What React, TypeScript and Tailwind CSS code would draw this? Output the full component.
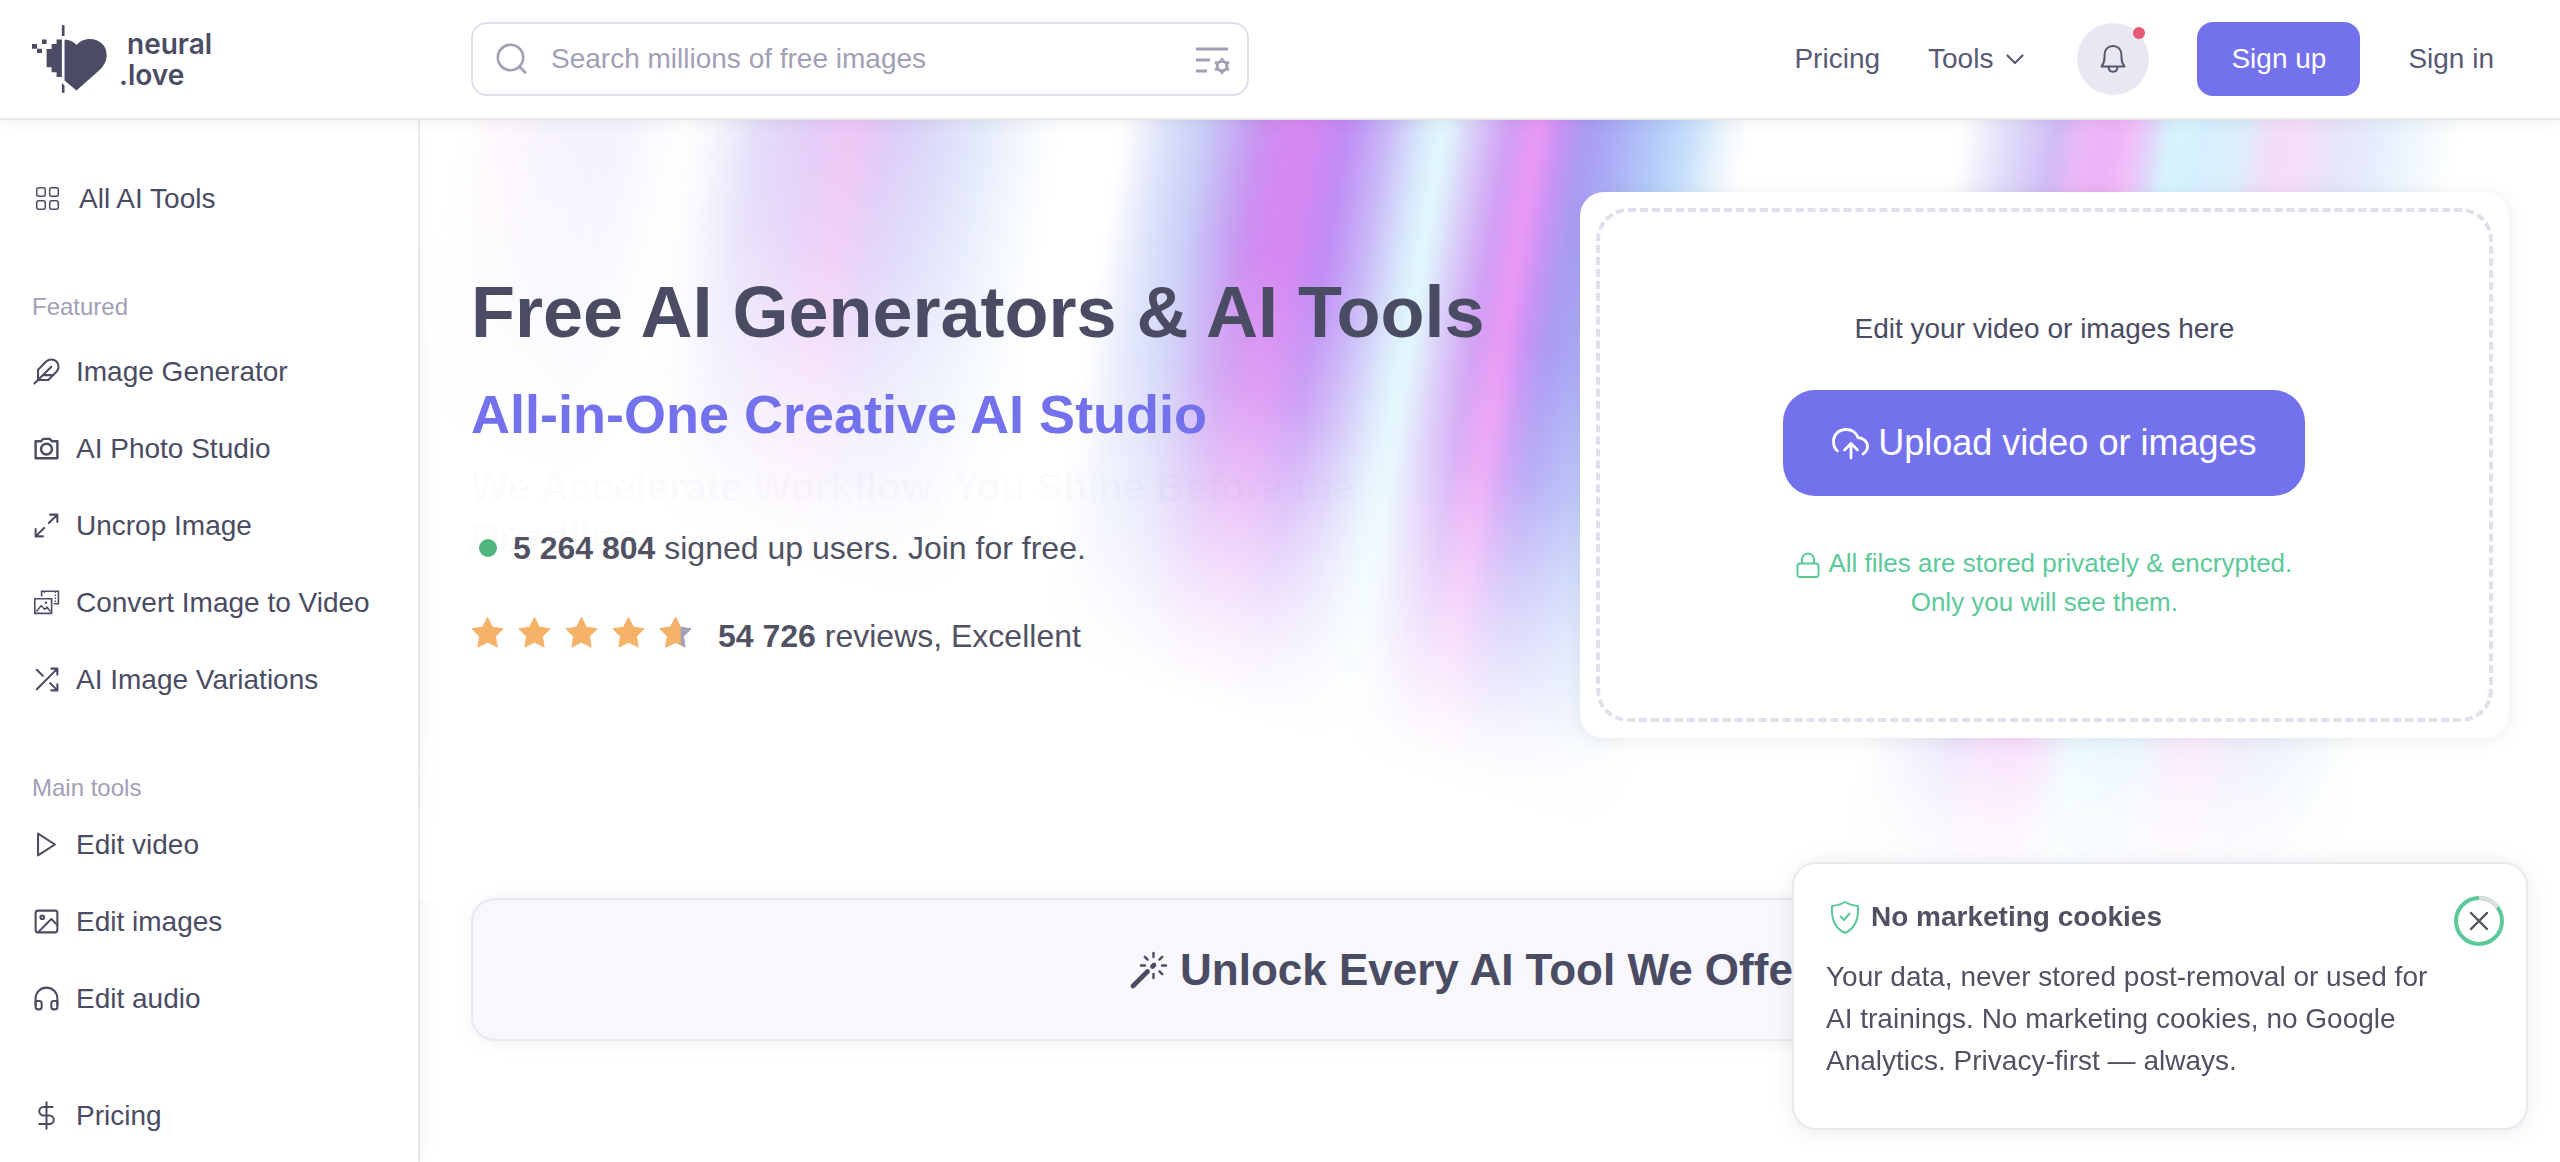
import type { ReactNode } from "react";
import { RiCameraLine } from "react-icons/ri";

const AURORA: [number, string][] = [
  [40, "#ffffff"], [80, "#fdf6fc"], [140, "#f5f1fd"], [200, "#f1f2fe"], [235, "#f8f9fe"], [265, "#ffffff"],
  [300, "#f4f3fc"], [340, "#e2daf9"], [395, "#e2ccf8"], [435, "#efc5f4"], [470, "#decbf8"], [510, "#dcd8f9"],
  [560, "#e3e9fb"], [605, "#f3f8fe"], [645, "#ffffff"], [705, "#ffffff"], [742, "#e0e5fb"], [786, "#c9cdf7"],
  [824, "#c6a4f3"], [850, "#cd8df1"], [885, "#d987f2"], [928, "#bf8bf4"], [965, "#c8b4f7"], [1005, "#d9eafc"],
  [1027, "#e2fafd"], [1058, "#d9c9f8"], [1092, "#cf9cf4"], [1120, "#ee99f4"], [1142, "#c893f5"], [1168, "#a89bf3"],
  [1198, "#abadf6"], [1242, "#b5cdf9"], [1275, "#c9e1fb"], [1305, "#ecf5fd"], [1330, "#ffffff"], [1545, "#ffffff"],
  [1575, "#e9e8fa"], [1606, "#dbd3f8"], [1640, "#cfbaf6"], [1667, "#efb8f8"], [1689, "#e8b2f6"], [1709, "#f4b8f8"],
  [1734, "#e3d4fb"], [1755, "#d5f7fd"], [1784, "#d6effe"], [1824, "#dbeffe"], [1852, "#f1ddfa"], [1884, "#f7defa"],
  [1919, "#e6e4fa"], [1954, "#e5ebfc"], [1994, "#eff6fe"], [2024, "#f8fcfd"], [2045, "#ffffff"],
];

function Aurora() {
  return (
    <svg
      className="pointer-events-none absolute inset-x-0 top-0 h-[780px] w-full"
      viewBox="0 0 2140 780"
      preserveAspectRatio="none"
      aria-hidden="true"
    >
      <defs>
        <linearGradient id="rays" gradientUnits="userSpaceOnUse" x1="0" y1="0" x2="2083" y2="344">
          {AURORA.map(([x, color]) => (
            <stop key={x} offset={x / 2140} stopColor={color} />
          ))}
        </linearGradient>
        <linearGradient id="fade" gradientUnits="userSpaceOnUse" x1="43" y1="-130" x2="-97" y2="294">
          <stop offset="0" stopColor="#fff" />
          <stop offset="0.3" stopColor="#ccc" />
          <stop offset="0.6" stopColor="#666" />
          <stop offset="0.85" stopColor="#1c1c1c" />
          <stop offset="1" stopColor="#000" />
        </linearGradient>
        <linearGradient id="floor" x1="0" y1="0" x2="0" y2="1">
          <stop offset="0" stopColor="#fff" stopOpacity="0" />
          <stop offset="1" stopColor="#fff" stopOpacity="0.8" />
        </linearGradient>
        <filter id="soften" x="-5%" y="-5%" width="110%" height="110%">
          <feGaussianBlur stdDeviation="7" />
        </filter>
        <mask id="fadeMask" maskUnits="userSpaceOnUse" x="0" y="0" width="2140" height="780">
          <rect width="2140" height="780" fill="url(#fade)" />
        </mask>
      </defs>
      <g mask="url(#fadeMask)">
        <rect x="-60" y="-60" width="2260" height="900" fill="url(#rays)" filter="url(#soften)" />
      </g>
      <rect y="580" width="2140" height="200" fill="url(#floor)" />
    </svg>
  );
}

function Icon({ children, className = "size-[29px]" }: { children: ReactNode; className?: string }) {
  return (
    <svg
      className={`shrink-0 ${className}`}
      viewBox="0 0 24 24"
      fill="none"
      stroke="currentColor"
      strokeWidth="1.7"
      strokeLinecap="round"
      strokeLinejoin="round"
      aria-hidden="true"
    >
      {children}
    </svg>
  );
}

function Logo() {
  return (
    <a href="#" className="flex items-center text-[#4a4c63]">
      <svg className="h-[68px] w-[75px]" viewBox="96 75 226 204" fill="currentColor" aria-hidden="true">
        <path d="M194 119C208 119 222 124 230 135C240 124 254 117 270 117C300 117 321 138 321 164C321 184 312 198 298 212L230 272L194 242Z" />
        <path d="M170 118h16v113h-16v-14h-15v-15h-15v-55h15v-15h15z" />
        <path d="M126 118h14v14h-14zM96 132h15v14h15v13h-15v-13H96zM186 75h8v33h-8zM186 249l8 8v22h-8z" />
      </svg>
      <span className="ml-3 block pt-[2px] font-['Inter',sans-serif] text-[28px] leading-[31px] font-semibold">
        <span className="block pl-2">neural</span>
        <span className="block">.love</span>
      </span>
    </a>
  );
}

const FEATURED: { label: string; icon: ReactNode }[] = [
  {
    label: "Image Generator",
    icon: (
      <Icon>
        <path d="M20.24 12.24a6 6 0 0 0-8.49-8.49L5 10.5V19h8.5zM16 8 2 22M17.5 15H9" />
      </Icon>
    ),
  },
  { label: "AI Photo Studio", icon: <RiCameraLine className="size-[29px] shrink-0" aria-hidden="true" /> },
  {
    label: "Uncrop Image",
    icon: (
      <Icon>
        <path d="M15 3h6v6M9 21H3v-6M21 3l-7 7M3 21l7-7" />
      </Icon>
    ),
  },
  {
    label: "Convert Image to Video",
    icon: (
      <svg className="size-[29px] shrink-0" viewBox="0 0 29 29" fill="none" stroke="currentColor" strokeWidth="1.6" aria-hidden="true">
        <path d="M2.8 10.8h16.8v14.6H2.8zM9.6 8.4V3.2h16.8v12.6h-4.6" />
        <path d="m4.5 23.5 4.7-6 3.5 4 2.3-2.5 3.5 4.5" strokeWidth="1.4" />
        <path d="M12.3 3.5v3M23.4 3.5v12" strokeWidth="1.3" strokeDasharray="1.6 1.4" />
        <circle cx="14" cy="14.8" r="1.2" fill="currentColor" stroke="none" />
      </svg>
    ),
  },
  {
    label: "AI Image Variations",
    icon: (
      <Icon>
        <path d="M16 3h5v5M4 20 21 3M21 16v5h-5M15 15l6 6M4 4l5 5" />
      </Icon>
    ),
  },
];

const MAIN_TOOLS: { label: string; icon: ReactNode }[] = [
  {
    label: "Edit video",
    icon: (
      <Icon>
        <path d="m5 3 14 9-14 9z" />
      </Icon>
    ),
  },
  {
    label: "Edit images",
    icon: (
      <Icon>
        <rect x="3" y="3" width="18" height="18" rx="2" />
        <circle cx="8.5" cy="8.5" r="1.5" />
        <path d="m21 15-5-5L5 21" />
      </Icon>
    ),
  },
  {
    label: "Edit audio",
    icon: (
      <Icon>
        <path d="M3 18v-6a9 9 0 0 1 18 0v6" />
        <path d="M21 19a2 2 0 0 1-2 2h-1a2 2 0 0 1-2-2v-3a2 2 0 0 1 2-2h3zM3 19a2 2 0 0 0 2 2h1a2 2 0 0 0 2-2v-3a2 2 0 0 0-2-2H3z" />
      </Icon>
    ),
  },
];

function SideLink({ label, icon }: { label: string; icon: ReactNode }) {
  return (
    <a href="#" className="flex h-[77px] items-center gap-[15px] whitespace-nowrap">
      {icon}
      {label}
    </a>
  );
}

function Sidebar() {
  return (
    <aside className="w-[420px] shrink-0 border-r-2 border-[#e8e8f1] pt-10 pl-8 text-[28px] text-[#4a4c63] shadow-[2px_0_16px_rgba(0,0,0,0.05)]">
      <nav aria-label="Tools">
        <a href="#" className="flex h-[77px] items-center gap-[18px]">
          <svg className="size-[29px] shrink-0" viewBox="0 0 29 29" fill="none" stroke="currentColor" strokeWidth="1.5" aria-hidden="true">
            <rect x="4.7" y="3.7" width="8.6" height="8.6" rx="2" />
            <rect x="17.7" y="3.7" width="8.6" height="8.6" rx="2" />
            <rect x="4.7" y="16.7" width="8.6" height="8.6" rx="2" />
            <rect x="17.7" y="16.7" width="8.6" height="8.6" rx="2" />
          </svg>
          All AI Tools
        </a>
        <h2 className="mt-[52px] mb-2 text-2xl leading-9 text-[#a0a0b6]">Featured</h2>
        {FEATURED.map((item) => (
          <SideLink key={item.label} {...item} />
        ))}
        <h2 className="mt-[52px] text-2xl leading-9 text-[#a0a0b6]">Main tools</h2>
        {MAIN_TOOLS.map((item) => (
          <SideLink key={item.label} {...item} />
        ))}
        <div className="mt-10">
          <SideLink
            label="Pricing"
            icon={
              <Icon>
                <path d="M12 1v22M17 5H9.5a3.5 3.5 0 0 0 0 7h5a3.5 3.5 0 0 1 0 7H6" />
              </Icon>
            }
          />
        </div>
      </nav>
    </aside>
  );
}

function Header() {
  return (
    <header className="relative z-10 flex h-[120px] items-center border-b-2 border-[#e8e8f1] bg-white pl-8 text-[28px] text-[#585a75] shadow-[0_2px_16px_rgba(0,0,0,0.06)]">
      <div className="w-[439px] shrink-0">
        <Logo />
      </div>
      <form role="search" className="flex h-[74px] w-[778px] items-center rounded-2xl border-2 border-[#e0dfeb] bg-white pr-4 pl-[22px] text-[#a0a0b6]">
        <svg className="size-8 shrink-0" viewBox="0 0 32 32" fill="none" stroke="currentColor" strokeWidth="2.6" strokeLinecap="round" aria-hidden="true">
          <circle cx="15.5" cy="14.5" r="12.7" />
          <path d="m24.5 23.5 5.7 6" />
        </svg>
        <input
          type="search"
          aria-label="Search millions of free images"
          placeholder="Search millions of free images"
          className="ml-6 min-w-0 flex-1 bg-transparent outline-none placeholder:text-[#a0a0b6]"
        />
        <button type="button" aria-label="Search settings">
          <svg className="h-8 w-9" viewBox="0 0 36 32" fill="none" stroke="currentColor" strokeWidth="3" aria-hidden="true">
            <path d="M1 6h32M1 17h14M1 28h11" />
            <circle cx="27" cy="23" r="4.8" strokeWidth="3" />
            <path d="M27 15v4M27 27v4M20 19l3.4 2M30.6 25l3.4 2M20 27l3.4-2M30.6 21l3.4-2" strokeWidth="3" />
          </svg>
        </button>
      </form>
      <nav aria-label="Account" className="ml-auto flex items-center pr-[66px]">
        <a href="#">Pricing</a>
        <button type="button" className="ml-12 flex items-center gap-3">
          Tools
          <svg className="h-5 w-5" viewBox="0 0 20 20" fill="none" stroke="currentColor" strokeWidth="2.2" strokeLinecap="round" strokeLinejoin="round" aria-hidden="true">
            <path d="m2.5 6.500 7.500 7.500 7.500-7.500" />
          </svg>
        </button>
        <button type="button" aria-label="Notifications" className="relative ml-[52px] flex size-[72px] items-center justify-center rounded-full bg-[#e8e8f2] text-[#55566a]">
          <svg className="size-8" viewBox="0 0 32 32" fill="none" stroke="currentColor" strokeWidth="2" strokeLinejoin="round" aria-hidden="true">
            <path d="M4.500 23.500h23c-2-2.500-3-5-3-9v-2C24.500 6.500 21 3 16 3s-8.500 3.500-8.500 9.500v2c0 4-1 6.500-3 9z" />
            <path d="M11.500 23.500c0 3.500 1.800 5.200 4.500 5.200s4.500-1.700 4.500-5.200" />
          </svg>
          <span className="absolute top-1 right-1 size-3 rounded-full bg-[#e65a78]" />
        </button>
        <a href="#" className="ml-12 flex h-[74px] items-center rounded-2xl bg-[#7371ec] px-[34px] text-white">
          Sign up
        </a>
        <a href="#" className="ml-12">
          Sign in
        </a>
      </nav>
    </header>
  );
}

const STAR = "M16.500 4.500 21.700 14.800 33 16.600 25 24.700 26.800 36 16.500 30.900 6.200 36 8 24.700 0 16.600 11.300 14.800Z";

function Stars() {
  return (
    <span className="flex gap-[14px]" role="img" aria-label="4.7 out of 5 stars">
      {[0, 1, 2, 3, 4].map((i) => (
        <svg key={i} className="h-10 w-[33px]" viewBox="-1 0 35 40" aria-hidden="true">
          {i === 4 && (
            <clipPath id="partial">
              <rect x="-1" width="23" height="40" />
            </clipPath>
          )}
          {i === 4 && <path d={STAR} fill="#a0a0b6" stroke="#a0a0b6" strokeLinejoin="round" />}
          <path
            d={STAR}
            fill="#f5b36a"
            stroke="#f5b36a"
            strokeLinejoin="round"
            clipPath={i === 4 ? "url(#partial)" : undefined}
          />
        </svg>
      ))}
    </span>
  );
}

function Intro() {
  return (
    <div className="min-w-0 flex-1 pt-[72px]">
      <h1 className="text-[72px] leading-[96px] font-bold whitespace-nowrap text-[#4a4c63]">Free AI Generators &amp; AI Tools</h1>
      <div className="relative mt-[18px] font-bold">
        <p className="text-[54px] leading-[72px] text-[#7371ec]">All-in-One Creative AI Studio</p>
        <p className="absolute top-full left-0 mt-3 w-[900px] text-[40px] leading-[50px] text-[#8080a0]/3">
          We Accelerate Workflow, You Shine Before the Deadline
        </p>
      </div>
      <p className="relative mt-[74px] flex items-center gap-4 pl-2 text-[32px] leading-[48px] text-[#505263]">
        <span className="size-[18px] rounded-full bg-[#50b480]" />
        <span>
          <strong>5 264 804</strong> signed up users. Join for free.
        </span>
      </p>
      <div className="mt-10 flex items-start gap-[26px] text-[32px] leading-[48px] text-[#505263]">
        <Stars />
        <p>
          <strong>54 726</strong> reviews, Excellent
        </p>
      </div>
    </div>
  );
}

function UploadCard() {
  return (
    <div className="w-[45.6%] shrink-0 rounded-3xl bg-white p-4 shadow-[0_2px_20px_rgba(0,0,0,0.07)]">
      <div className="flex min-h-[514px] flex-col items-center justify-center rounded-[32px] border-4 border-dashed border-[#e0dfeb]">
        <p className="text-[28px] leading-[42px] text-[#4a4c63]">Edit your video or images here</p>
        <button type="button" className="mt-10 flex h-[106px] items-center gap-2 rounded-[32px] bg-[#7371ec] px-[49px] text-4xl text-white">
          <svg className="h-[33px] w-[38px]" viewBox="0 0 38 33" fill="none" stroke="currentColor" strokeWidth="2.8" strokeLinecap="round" strokeLinejoin="round" aria-hidden="true">
            <path d="M5.500 24C3 22 1.500 18.500 1.500 14.500 1.500 7.500 7 2.500 14 2.500c5.500 0 10.500 3 12 8 5 .5 9.500 4 9.500 9 0 3-1.500 5.500-4.500 7.500" />
            <path d="M19 31V17M12.500 23l6.500-6.500 6.500 6.500" />
          </svg>
          Upload video or images
        </button>
        <p className="mt-12 text-center text-[26px] leading-[39px] text-[#5cc99a]">
          <svg className="mr-2 inline h-7 w-6" viewBox="0 0 24 28" fill="none" stroke="currentColor" strokeWidth="2" aria-hidden="true">
            <rect x="1.500" y="12.500" width="21" height="13.500" rx="2.500" />
            <path d="M6 12.500V8.500a6 6 0 0 1 12 0v4" />
          </svg>
          All files are stored privately &amp; encrypted.
          <br />
          Only you will see them.
        </p>
      </div>
    </div>
  );
}

function Banner() {
  return (
    <a href="#" className="mt-40 flex h-[143px] items-center justify-center gap-3 rounded-3xl border-2 border-[#e8e8f1] bg-[#f7f7fc] pr-10 text-[44px] font-bold text-[#4a4c63] shadow-[0_2px_20px_rgba(0,0,0,0.06)]">
      <svg className="size-[38px]" viewBox="0 0 38 38" fill="none" stroke="currentColor" strokeWidth="2.400" strokeLinecap="round" aria-hidden="true">
        <path d="M3 35 17.500 20.500" strokeWidth="4.600" />
        <path d="m22.500 15.500 1.500-1.500" strokeWidth="4.600" />
        <path d="M23.500 2v4M23.500 23v4M11 14.500h4M32 14.500h4M14.800 5.800l2.800 2.800M32.200 5.800l-2.800 2.800M29.400 20.400l2.800 2.800" />
      </svg>
      Unlock Every AI Tool We Offer
    </a>
  );
}

function CookieNotice() {
  return (
    <section aria-label="Privacy notice" className="fixed right-8 bottom-8 z-20 w-[736px] rounded-3xl border-2 border-[#e8e8f1] bg-white pt-8 pr-[22px] pb-[46px] pl-8 text-[28px] leading-[42px] text-[#505263] shadow-[0_2px_24px_rgba(0,0,0,0.08)]">
      <div className="flex items-start justify-between">
        <div>
          <h2 className="flex items-center gap-2 font-bold">
            <svg className="size-[37px] text-[#5cc99a]" viewBox="0 0 37 37" fill="none" stroke="currentColor" strokeWidth="2" strokeLinecap="round" strokeLinejoin="round" aria-hidden="true">
              <path d="M19 3C15 5.500 10.500 6.500 6 7c-.8 11.500 2 22 13 27 11-5 13.800-15.500 13-27-4.500-.5-9-1.500-13-4z" />
              <path d="m14.500 17.500 3.500 3.500 5.500-6.500" />
            </svg>
            No marketing cookies
          </h2>
          <p className="mt-[18px] w-[630px]">
            Your data, never stored post-removal or used for AI trainings. No marketing cookies, no Google Analytics. Privacy-first — always.
          </p>
        </div>
        <button type="button" aria-label="Close" className="-ml-10">
          <svg className="size-[50px]" viewBox="0 0 50 50" fill="none" aria-hidden="true">
            <circle cx="25" cy="25" r="23" stroke="#5cc99a" strokeWidth="4" />
            <path d="M25 2a23 23 0 0 1 18.600 9.500" stroke="#dcdedc" strokeWidth="4" />
            <path d="m17 17 16 16M33 17 17 33" stroke="#505263" strokeWidth="2.400" strokeLinecap="round" />
          </svg>
        </button>
      </div>
    </section>
  );
}

export default function App() {
  return (
    <div className="flex min-h-screen flex-col bg-white font-['Liberation_Sans',Arial,sans-serif]">
      <Header />
      <div className="flex flex-1">
        <Sidebar />
        <main className="relative min-w-0 flex-1">
          <Aurora />
          <div className="relative px-[51px] pt-[72px]">
            <div className="flex items-start">
              <Intro />
              <UploadCard />
            </div>
            <Banner />
          </div>
        </main>
      </div>
      <CookieNotice />
    </div>
  );
}
